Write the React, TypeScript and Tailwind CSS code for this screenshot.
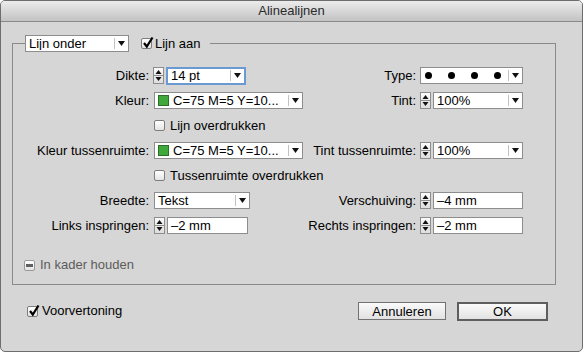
import React from 'react';

const font = { fontFamily: '"Liberation Sans", Arial, sans-serif' };

const Arrow = () => (
    <svg width="7" height="5" viewBox="0 0 7 5" className="shrink-0">
        <path d="M0 0 H7 L3.5 5 Z" fill="#111" />
    </svg>
);

const Spinner = () => (
    <div className="w-[11px] h-[17px] shrink-0 border border-[#8d8d8d] bg-gradient-to-b from-[#fbfbfb] to-[#dedede] flex flex-col">
        <svg width="9" height="15" viewBox="0 0 9 15">
            <path d="M1.5 6 L4.5 2 L7.5 6 Z" fill="#111" />
            <line x1="0" y1="7.5" x2="9" y2="7.5" stroke="#8d8d8d" strokeWidth="1" />
            <path d="M1.5 9 L7.5 9 L4.5 13 Z" fill="#111" />
        </svg>
    </div>
);

const Dropdown = ({ width, children, focused = false }: { width: string; children: React.ReactNode; focused?: boolean }) => (
    <div
        className={`${width} h-[17px] shrink-0 bg-white flex items-center ${focused ? 'border-2 border-[#6b9ad3] h-[18px]' : 'border border-[#8d8d8d]'}`}
    >
        <div className="flex-1 min-w-0 flex items-center pl-[3px] text-[13px] leading-none text-black whitespace-nowrap overflow-hidden">{children}</div>
        <div className="w-px h-[11px] bg-[#c2c2c2]" />
        <div className="w-[13px] flex justify-center">
            <Arrow />
        </div>
    </div>
);

const Field = ({ width, value }: { width: string; value: string }) => (
    <div className={`${width} h-[17px] shrink-0 bg-white border border-[#8d8d8d] flex items-center pl-[3px] text-[13px] leading-none text-black`}>
        {value}
    </div>
);

const Check = ({ checked = false, mixed = false }: { checked?: boolean; mixed?: boolean }) => (
    <div className={`relative w-[11px] h-[11px] shrink-0 border ${mixed ? 'border-[#9a9a9a]' : 'border-[#7d7d7d]'} bg-gradient-to-b from-white to-[#e4e4e4] rounded-[2px]`}>
        {checked && (
            <svg width="13" height="13" viewBox="0 0 13 13" className="absolute left-[0px] top-[-3px]">
                <path d="M2 7 L4.8 10.5 L10.5 1.5" fill="none" stroke="#000" strokeWidth="2.2" />
            </svg>
        )}
        {mixed && <div className="absolute left-[1px] right-[1px] top-[3px] h-[3px] bg-[#606060]" />}
    </div>
);

const Swatch = () => <div className="w-[11px] h-[11px] shrink-0 bg-[#3ea83a] border border-[#2c6e2a] mr-[4px]" />;

const Label = ({ w, children }: { w: string; children: React.ReactNode }) => (
    <div className={`${w} shrink-0 text-right text-[13px] text-black whitespace-nowrap`}>{children}</div>
);

export default function App() {
    return (
        <div style={font} className="w-[583px] h-[352px] bg-[#d6d6d6] border border-[#6d6d6d] rounded-[5px] overflow-hidden flex flex-col select-none">
            {/* title bar */}
            <div className="h-[21px] shrink-0 border-b border-[#8a8a8a] bg-gradient-to-b from-[#ececec] to-[#c3c3c3] flex items-center justify-center text-[13px] text-[#2a2a2a]">
                Alinealijnen
            </div>

            {/* group */}
            <div className="ml-[11px] mt-[12px] w-[544px]">
                <div className="flex h-[19px] items-center">
                    <div className="self-end h-[10px] w-[13px] border-t border-l border-[#8a8a8a]" />
                    <Dropdown width="w-[104px]">Lijn onder</Dropdown>
                    <div className="ml-[12px] flex items-center">
                        <Check checked />
                        <span className="ml-[3px] text-[13px] text-black">Lijn aan</span>
                    </div>
                    <div className="ml-[9px] self-end h-[10px] flex-1 border-t border-r border-[#8a8a8a]" />
                </div>
                <div className="border-l border-r border-b border-[#8a8a8a] pt-[10px] pb-[9px]">
                    <div className="flex items-center h-[25px]">
                        <div className="w-[291px] flex items-center">
                            <Label w="w-[136px]">Dikte:</Label>
                            <div className="ml-[4px] flex items-center gap-[2px]">
                                <Spinner />
                                <Dropdown width="w-[80px]" focused>14 pt</Dropdown>
                            </div>
                        </div>
                        <Label w="w-[112px]">Type:</Label>
                        <div className="ml-[4px]">
                            <Dropdown width="w-[103px]">
                                <div className="flex items-center gap-[16px] pl-[1px]">
                                    <span className="w-[7px] h-[7px] rounded-full bg-black" />
                                    <span className="w-[7px] h-[7px] rounded-full bg-black" />
                                    <span className="w-[7px] h-[7px] rounded-full bg-black" />
                                    <span className="w-[7px] h-[7px] rounded-full bg-black" />
                                </div>
                            </Dropdown>
                        </div>
                    </div>

                    <div className="flex items-center h-[25px]">
                        <div className="w-[291px] flex items-center">
                            <Label w="w-[136px]">Kleur:</Label>
                            <div className="ml-[5px]">
                                <Dropdown width="w-[149px]">
                                    <Swatch />
                                    C=75 M=5 Y=10...
                                </Dropdown>
                            </div>
                        </div>
                        <Label w="w-[112px]">Tint:</Label>
                        <div className="ml-[4px] flex items-center gap-[2px]">
                            <Spinner />
                            <Dropdown width="w-[90px]">100%</Dropdown>
                        </div>
                    </div>

                    <div className="flex items-center h-[25px] pl-[141px]">
                        <Check />
                        <span className="ml-[5px] text-[13px] text-black">Lijn overdrukken</span>
                    </div>

                    <div className="flex items-center h-[25px]">
                        <div className="w-[291px] flex items-center">
                            <Label w="w-[136px]">Kleur tussenruimte:</Label>
                            <div className="ml-[5px]">
                                <Dropdown width="w-[149px]">
                                    <Swatch />
                                    C=75 M=5 Y=10...
                                </Dropdown>
                            </div>
                        </div>
                        <Label w="w-[112px]">Tint tussenruimte:</Label>
                        <div className="ml-[4px] flex items-center gap-[2px]">
                            <Spinner />
                            <Dropdown width="w-[90px]">100%</Dropdown>
                        </div>
                    </div>

                    <div className="flex items-center h-[25px] pl-[141px]">
                        <Check />
                        <span className="ml-[5px] text-[13px] text-black">Tussenruimte overdrukken</span>
                    </div>

                    <div className="flex items-center h-[25px]">
                        <div className="w-[291px] flex items-center">
                            <Label w="w-[136px]">Breedte:</Label>
                            <div className="ml-[5px]">
                                <Dropdown width="w-[96px]">Tekst</Dropdown>
                            </div>
                        </div>
                        <Label w="w-[112px]">Verschuiving:</Label>
                        <div className="ml-[4px] flex items-center gap-[2px]">
                            <Spinner />
                            <Field width="w-[90px]" value="–4 mm" />
                        </div>
                    </div>

                    <div className="flex items-center h-[25px]">
                        <div className="w-[291px] flex items-center">
                            <Label w="w-[136px]">Links inspringen:</Label>
                            <div className="ml-[5px] flex items-center gap-[2px]">
                                <Spinner />
                                <Field width="w-[81px]" value="–2 mm" />
                            </div>
                        </div>
                        <Label w="w-[112px]">Rechts inspringen:</Label>
                        <div className="ml-[4px] flex items-center gap-[2px]">
                            <Spinner />
                            <Field width="w-[90px]" value="–2 mm" />
                        </div>
                    </div>

                    <div className="mt-[17px] h-[20px] flex items-center pl-[11px]">
                        <Check mixed />
                        <span className="ml-[5px] text-[13px] text-[#5c5c5c]">In kader houden</span>
                    </div>
                </div>
            </div>

            {/* footer */}
            <div className="mt-[17px] h-[18px] flex items-center pl-[26px] pr-[34px]">
                <Check checked />
                <span className="ml-[4px] text-[13px] text-black">Voorvertoning</span>
                <div className="flex-1" />
                <button className="w-[88px] h-[18px] border border-[#727272] bg-gradient-to-b from-[#fafafa] to-[#e2e2e2] text-[13px] text-black leading-none">
                    Annuleren
                </button>
                <button className="ml-[11px] w-[91px] h-[19px] border-2 border-[#5e5e5e] bg-gradient-to-b from-[#fafafa] to-[#e2e2e2] text-[13px] text-black leading-none">
                    OK
                </button>
            </div>
        </div>
    );
}
